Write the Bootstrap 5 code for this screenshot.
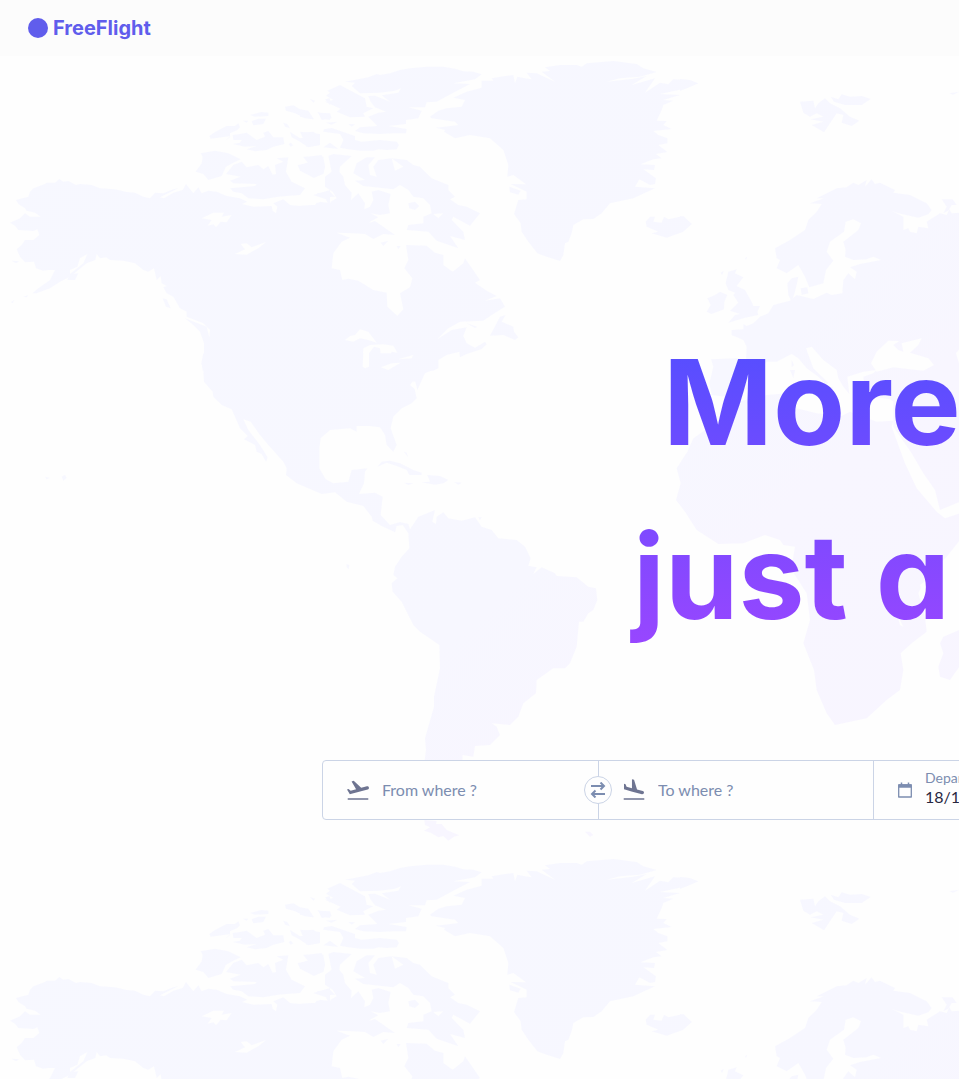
<!DOCTYPE html>
<html lang="en">
<head>
<meta charset="utf-8">
<meta name="viewport" content="width=device-width, initial-scale=1">
<title>FreeFlight</title>
<link href="https://cdn.jsdelivr.net/npm/bootstrap@5.3.0/dist/css/bootstrap.min.css" rel="stylesheet">
<style>
  body { background: #fefefe; font-family: Lato, "Open Sans", sans-serif; overflow-x: hidden; }
  .site-bar { height: 56px; padding: 0 28px; background: #fcfcfc; }
  .brand-link { gap: 5px; color: #605dec; font: 700 20px/24px Inter, sans-serif; }
  .brand-dot { width: 20px; height: 20px; background: #605dec; }
  .hero { min-height: calc(100vh - 56px); padding-top: 259px; padding-left: 322px; }
  .hero-map { inset: 0; }
  .headline { font: 700 118px/174px Inter, sans-serif; font-feature-settings: "cv11"; margin-bottom: 97px;
    background: linear-gradient(#4f4fff, #9c46ff); -webkit-background-clip: text; background-clip: text; color: transparent; }
  .line-one { padding-left: 341px; }
  .line-two { padding-left: 311px; }
  .search { width: 1276px; height: 60px; background: #fefefe; border: 1px solid #cbd4e6; border-radius: 4px; }
  .cell { width: 275px; padding-left: 22px; gap: 11px; color: #6e7491; }
  .cell + .cell { border-left: 1px solid #cbd4e6; }
  .cell input { border: 0; background: none; outline: 0; padding: 0; width: 180px; font-size: 16px; color: #7c8db0; }
  .cell input::placeholder { color: #7c8db0; opacity: 1; }
  .date-label { font-size: 14px; line-height: 18px; color: #7c8db0; }
  .date-cell .date-text { padding-bottom: 4px; }
  .date-cell input { line-height: 20px; color: #27273f; }
  .swap { left: 261px; top: 15px; width: 28px; height: 28px; background: #fefefe; border: 1px solid #cbd4e6; color: #7c8db0; }
</style>
</head>
<body>
<header class="site-bar d-flex align-items-center">
  <a class="brand-link d-flex align-items-center text-decoration-none" href="#"><span class="brand-dot rounded-circle"></span>FreeFlight</a>
</header>
<main class="hero position-relative overflow-hidden">
  <svg class="hero-map position-absolute w-100 h-100" aria-hidden="true">
    <defs>
      <linearGradient id="tint" gradientUnits="userSpaceOnUse" x1="0" y1="0" x2="870" y2="960">
        <stop offset="0" stop-color="#f7f8ff"/><stop offset=".6" stop-color="#f7f7ff"/><stop offset=".7" stop-color="#f8f6ff"/><stop offset="1" stop-color="#f8f5ff"/>
      </linearGradient>
      <mask id="land" maskUnits="userSpaceOnUse" x="0" y="50" width="1920" height="800">
        <!-- Alaska and western Canada -->
        <g fill="#fff" transform="translate(0 50) scale(.33333)">
          <path d="M48 450L85 440 90 425 100 415 135 402 140 398 165 398 178 387 190 395 205 393 228 405 240 402 275 405 300 415 345 418 380 426 405 428 430 440 450 445 465 428 490 430 520 418 535 415 480 442 492 445 520 428 548 420 558 402 568 415 580 430 595 412 605 430 625 422 650 425 680 438 720 445 742 455 726 462 760 470 815 468 818 482 828 490 832 470 820 460 850 448 870 465 900 468 945 465 960 455 993 460V962H608L605 940 612 920 612 880 600 845 580 825 555 805 620 830 628 862 630 840 610 820 560 800 560 785 540 775 520 740 500 730 490 712 500 708 485 700 482 678 470 690 462 655 445 665 430 660 405 640 370 632 330 630 318 622 300 625 290 612 286 630 260 640 235 660 210 680 180 695 150 715 110 730 97 730 115 715 150 690 165 660 145 660 130 662 108 655 102 635 75 637 60 620 50 598 65 585 75 570 100 570 118 555 112 538 100 543 55 540 45 527 30 518 60 505 75 490 90 500 122 500 105 488 80 482 75 475 55 462Z"/>
          <path d="M602 310L645 302 685 310 722 328 700 338 678 350 665 378 625 390 610 372 587 365 605 340 608 320ZM678 372L700 345 725 335 740 352 775 345 790 358 805 348 818 374 828 372 825 345 850 335 830 325 865 322 858 365 875 395 915 415 900 435 860 438 835 440 790 448 745 445 725 430 700 425 690 415 765 408 770 402 700 400 690 392 722 380ZM628 258L645 246 680 228 705 228 715 220 720 232 712 240 690 250 690 262 675 272 692 258 655 263 632 266ZM698 255L720 252 740 248 770 270 795 260 790 248 805 243 820 262 850 262 853 282 820 290 800 300 765 304 740 298 770 288 735 290 698 282 720 278 725 270 700 270ZM750 195L785 186 805 188 805 198 765 200ZM728 212L745 212 740 218ZM755 214L775 206 798 206 790 222 760 226ZM855 170L880 166 900 178 925 182 942 208 915 205 885 190 858 182ZM850 218L862 222 870 235 855 230ZM870 245L900 265 920 262 905 248 940 245 960 258 960 285 925 292 895 272 875 262ZM866 282L872 278 880 286 872 290ZM893 345L925 340 910 322 965 315 975 350 970 370 942 384 900 362ZM930 147L945 152 940 158ZM975 148L990 145V165ZM952 185L990 200V210L965 205ZM940 435L990 420V475L978 448ZM202 690L208 672 235 670 225 690ZM488 745L500 748 512 775 498 770ZM35 632L58 634 48 640ZM33 756L43 750 38 760ZM70 740L85 735 80 742Z"/>
          <path fill="#000" d="M605 505L640 488 672 488 665 500 695 495 680 517 662 515 648 532 640 523 623 527 635 510ZM705 612L735 598 722 582 740 580 755 592 798 576 775 595 755 605 740 614ZM942 752L955 750 970 785 972 808 960 790 945 772ZM210 660L232 650 240 625 262 612 250 640 210 672Z"/>
        </g>
        <!-- Eastern Canada, the Arctic islands and Greenland -->
        <g fill="#fff" transform="translate(300 50) scale(.33333)">
          <path d="M-6 468L45 465 50 458 75 460 85 478 92 455 110 445 98 425 75 410 75 380 95 365 85 318 100 312 155 318 120 350 118 365 130 380 135 405 155 428 153 450 175 430 195 460 193 478 210 470 220 450 215 425 235 420 272 432 265 465 270 490 240 495 212 490 235 502 210 515 195 552 160 550 110 548 150 563 125 575 100 610 95 655 120 660 127 690 145 686 175 692 220 720 260 728 262 770 292 797 310 778 300 730 330 712 337 685 313 655 325 630 318 585 380 587 405 608 430 615 430 645 458 665 490 640 495 625 540 690 525 698 560 722 590 738 555 752 600 745 615 770 575 795 550 812 480 815 445 835 412 868 455 840 500 832 490 858 500 880 525 893 555 875 560 883 545 897 500 912 480 922 478 905 440 915 415 930 415 955 400 962H-6Z"/>
          <path d="M390 200L415 182 440 175 485 170 495 150 460 143 500 125 545 113 545 92 580 92 575 85 615 78 640 75 645 100 652 80 675 85 695 88 680 68 710 70 765 95 725 65 750 63 735 52 780 45 830 45 845 50 860 40 940 33 1010 42 1030 55 1070 66 1020 80 960 85 920 95 1000 86 1040 78 995 105 1065 85 1035 128 1080 98 1105 103 1120 88 1160 90 1195 100 1160 115 1080 132 1140 135 1090 150 1120 152 1090 165 1085 180 1070 212 1100 213 1090 225 1115 237 1060 243 1075 255 1102 265 1102 280 1075 285 1102 306 1068 312 1085 325 1060 328 1022 343 1065 345 1062 360 1030 358 1068 385 1065 402 1050 405 1018 388 1005 410 1065 415 1000 445 930 460 905 490 880 507 850 508 820 525 815 550 805 575 795 580 790 615 780 633 740 620 712 610 685 575 665 545 662 520 642 492 655 450 680 448 680 425 632 402 678 403 640 375 622 380 625 345 610 300 570 265 510 255 465 265 432 245 435 240 408 233 475 225 465 215 395 205ZM628 410L662 422 655 434 630 427Z"/>
          <path d="M135 95L165 98 155 108 180 130 240 128 285 122 303 115 295 128 245 136 270 155 225 137 205 138 212 155 225 172 258 185 235 188 205 200 232 228 180 232 165 243 190 250 240 252 280 250 318 250 320 237 265 228 318 222 318 210 355 205 365 182 325 172 375 172 380 157 410 155 460 128 510 102 460 100 525 88 545 73 520 65 490 64 465 56 430 50 380 50 330 55 300 60 270 70 240 75 230 72 205 82 190 85ZM75 155L100 150 78 137 90 128 82 122 120 105 195 145 200 170 220 175 190 190 195 200 150 202 110 185 122 176ZM55 188L90 190 95 205 65 210ZM145 222L165 223 155 230ZM72 238L95 234 165 258 165 270 185 275 240 270 290 275 297 285 290 298 260 300 235 298 220 302 180 302 145 298 120 293 130 270 120 252 70 245ZM78 218L112 215 95 224ZM70 292L90 278 115 297ZM0 345L30 335 10 320 70 320 75 350 70 372 42 382ZM0 180L40 208 0 200ZM28 147L45 152ZM0 245L60 252 60 285 20 290ZM50 430L90 425 105 440 70 442ZM160 370L170 340 200 322 225 322 205 345 210 375 230 380 220 350 235 330 275 325 285 362 310 350 275 325 320 330 340 345 360 350 395 385 445 405 445 420 465 440 450 448 475 465 500 470 540 490 510 527 460 500 455 510 490 545 495 570 450 558 475 595 410 572 385 545 320 540 325 525 370 520 370 500 395 490 390 465 370 445 340 440 325 420 300 405 280 418 190 408 165 392 195 390ZM195 552L205 520 225 513 285 555 250 552 220 567ZM242 578L265 572 250 588ZM325 460L345 455 358 468 345 480 328 475ZM290 588L302 588 295 598ZM500 820L532 830 525 834ZM570 857L600 800 617 795 605 815 640 830 642 845 655 862 645 870 610 855ZM1037 515L1050 500 1065 500 1060 515 1085 518 1092 500 1105 508 1150 498 1175 522 1150 545 1100 563 1055 550 1075 545 1040 530Z"/>
          <path fill="#000" d="M135 870L150 858 165 855 180 838 205 845 230 878 205 870 180 865 160 875ZM188 948L190 895 210 885 250 883 280 887 292 908 275 905 262 935 255 912 243 918 240 895 222 890 207 910 207 945 197 955ZM297 928L315 918 340 915 335 924ZM245 955L270 940 302 935 280 950 255 962ZM400 492L430 490 415 505Z"/>
        </g>
        <!-- United States, Central and South America -->
        <g fill="#fff" transform="translate(180 320) scale(.33333)">
          <path d="M70 100L64 130 70 150 72 185 98 215 100 230 125 255 155 268 180 325 203 348 192 358 225 375 230 395 245 402 258 425 263 412 240 375 205 330 190 298 212 305 240 345 265 375 310 425 320 445 318 465 350 490 425 522 465 517 500 545 550 558 575 590 578 602 605 618 645 637 650 618 668 615 685 640 688 685 665 710 645 740 640 765 652 775 635 790 638 815 665 845 700 915 720 935 778 975 780 1045 762 1130 762 1160 735 1255 738 1290 730 1350H845L848 1305 880 1310 885 1278 930 1275 960 1245 950 1220 935 1210 990 1215 1015 1190 1030 1150 1068 1120 1070 1080 1120 1045 1155 1045 1170 1030 1190 980 1197 905 1210 905 1225 880 1240 870 1252 840 1248 805 1225 800 1190 772 1130 768 1125 760 1085 742 1060 762 1070 742 1045 737 1052 715 1035 680 1010 660 955 655 935 630 905 620 885 592 845 602 805 595 790 577 770 590 768 612 757 605 765 570 715 590 690 628 685 612 660 606 630 615 602 585 608 530 585 518 537 522 552 490 555 455 562 445 515 450 505 485 460 490 437 478 418 445 418 385 422 355 450 330 510 325 530 335 530 318 570 318 600 322 615 345 620 375 640 395 650 375 632 325 640 290 665 265 695 250 710 235 700 190 705 182 712 210 735 160 770 145 775 100Z"/>
          <path d="M592 440L605 425 630 422 660 430 700 450 725 458 725 465 688 465 680 450 650 438 620 428ZM724 487L750 485 742 465 780 468 805 480 790 490 765 494ZM822 486L845 488 835 494ZM672 488L700 490 685 495ZM672 395L680 398 684 412ZM895 592L905 592 900 600ZM500 732L508 735 506 748 500 742ZM-405 470L-390 474 -400 478ZM-355 470L-345 464 -340 474 -350 482Z"/>
          <path fill="#000" d="M1028 1165L1035 1148 1040 1155ZM548 140L550 95 567 90 567 140 555 145ZM602 142L635 130 662 128 625 150ZM655 118L700 105 695 115ZM690 195L700 182 708 210Z"/>
          <path d="M733 1500L770 1503 768 1512 785 1512 800 1530 838 1546 822 1550 805 1562 790 1548 775 1552 752 1538 732 1532 750 1522 735 1515ZM1215 1535L1230 1535 1240 1545 1230 1550Z"/>
        </g>
        <!-- Northern Europe -->
        <g fill="#fff" transform="translate(680 50) scale(.33333)">
          <path d="M840 870V488L815 490 808 478 800 495 780 490 740 515 745 535 715 530 710 550 690 545 685 535 670 540 670 500 635 482 655 490 715 503 745 493 755 480 740 460 690 435 640 428 645 420 600 398 585 402 575 388 555 410 560 390 535 405 520 398 500 412 470 415 440 430 410 445 432 445 390 460 425 462 410 485 385 510 375 540 330 570 285 595 290 625 300 630 290 655 320 670 355 645 375 680 388 712 430 700 438 660 460 632 440 605 450 575 492 545 497 515 520 508 543 520 535 540 490 575 497 600 495 620 520 630 560 628 580 620 603 630 540 642 510 652 530 665 525 688 505 670 490 690 487 730 455 735 440 728 400 747 350 735 330 752 280 765 265 790 240 800 220 820 200 828 190 822 190 838 155 840 155 855 175 858 190 870Z"/>
          <path d="M322 700L335 685 355 680 350 705 345 725 335 755 325 735ZM362 715L382 712 385 730 365 735ZM80 785L92 765 82 745 105 735 120 725 142 735 133 755 132 778 95 792ZM137 700L145 665 170 658 165 670 190 682 170 708 195 720 215 755 220 768 240 768 232 785 235 795 195 803 145 818 165 795 180 792 150 782 175 758 160 735 165 728 145 720ZM122 668L132 662 126 675ZM195 625L202 620 198 630ZM360 155L400 152 405 175 415 160 435 145 450 160 480 175 510 200 538 212 515 228 485 218 490 195 470 190 450 220 432 247 395 225 430 215 392 208 430 200 410 190 390 200 370 188ZM452 140L475 148 485 133 510 140 545 138 572 147 545 165 495 165 462 155ZM808 130L837 125 820 134ZM785 448L818 448 830 465 815 465 805 482 790 490 800 470ZM0 87L30 90 54 100 0 123ZM0 498L15 505 35 522 0 548Z"/>
        </g>
        <!-- Southern Europe, the Middle East and Africa -->
        <g fill="#fff" transform="translate(610 330) scale(.33333)">
          <path d="M365 0L365 15 400 30 410 50 408 90 380 85 303 88 310 110 298 160 305 195 345 200 395 190 435 160 450 115 470 95 500 95 545 72 565 85 590 115 625 140 640 155 640 172 655 158 610 115 588 55 605 50 640 90 680 120 685 145 700 170 718 192 712 140 760 125 800 120 790 130 760 140 765 180 790 200 840 208 850 215 850 290 905 370 940 430 975 480 990 540 1050 515V0Z"/>
          <path d="M300 290L250 325 232 365 200 415 212 460 198 510 225 545 260 600 325 642 400 640 465 615 510 630 520 645 555 650 550 680 545 720 590 790 600 870 580 940 612 1020 620 1080 650 1150 675 1185 770 1165 830 1110 870 1080 880 1020 872 970 905 940 950 905 945 860 925 790 950 740 1010 680 1050 630V550L1005 565 980 545 920 475 885 400 845 290 850 272 800 275 720 245 690 260 670 255 620 250 560 235 555 192 530 190 470 195 385 215 340 260ZM1048 900L1000 920 990 940 1000 970 985 1010 990 1040 1020 1050 1048 1010ZM625 175L670 170 660 190ZM540 120L555 120 550 145ZM545 90L552 105 545 112Z"/>
          <path fill="#000" d="M783 100L800 65 835 32 868 33 850 45 865 60 880 65 875 40 935 25 925 45 900 68 955 85 972 105 940 122 900 118 850 112 800 125ZM1038 70L1050 55V110ZM930 765L950 750 950 790 935 785ZM860 850L880 890 870 885Z"/>
        </g>
      </mask>
      <pattern id="world" patternUnits="userSpaceOnUse" width="1920" height="798">
        <g transform="translate(0 -56)"><rect y="50" width="1920" height="804" fill="url(#tint)" mask="url(#land)"/></g>
      </pattern>
    </defs>
    <rect width="100%" height="100%" fill="url(#world)"/>
  </svg>
  <h1 class="headline position-relative text-nowrap"><span class="line-one d-block">More</span><span class="line-two d-block">just a</span></h1>
  <form class="search position-relative d-flex">
    <label class="cell d-flex align-items-center flex-shrink-0">
      <svg width="26" height="26" viewBox="0 0 24 24" fill="currentColor" aria-hidden="true"><path d="M2.5 19.500h19v1.500h-19zm19.57-9.86c-.21-.8-1.04-1.28-1.84-1.06L14.92 10l-6.9-6.43-1.93.51 4.14 7.17-4.97 1.33-1.97-1.54-1.45.39 1.82 3.16.77 1.33 1.6-.43 5.31-1.42 4.35-1.16L21 11.49c.81-.23 1.28-1.05 1.07-1.85z"/></svg>
      <input type="text" placeholder="From where ?" aria-label="From where ?">
    </label>
    <label class="cell d-flex align-items-center flex-shrink-0">
      <svg width="26" height="26" viewBox="0 0 24 24" fill="currentColor" aria-hidden="true"><path d="M2.5 19.500h19v1.500h-19zm7.18-6.23l4.35 1.16 5.31 1.42c.8.21 1.62-.26 1.84-1.06.21-.8-.26-1.62-1.06-1.84l-5.31-1.42-2.76-9.02L10.12 2v8.28L5.15 8.95l-.93-2.32-1.45-.39v5.17l1.6.43 5.31 1.43z"/></svg>
      <input type="text" placeholder="To where ?" aria-label="To where ?">
    </label>
    <label class="cell date-cell d-flex align-items-center flex-shrink-0">
      <svg width="18" height="18" viewBox="0 0 18 18" fill="none" stroke="#7c8db0" aria-hidden="true"><path d="M2.700 4h12.600v12H2.700z" stroke-width="1.300" stroke-linejoin="round"/><path d="M2.500 5h13" stroke-width="3.500"/><path d="M5.500 1.500v3M12.500 1.500v3" stroke-width="1.500"/></svg>
      <span class="date-text d-flex flex-column"><span class="date-label">Departure</span><input type="text" value="18/11" aria-label="Departure date"></span>
    </label>
    <button type="button" class="swap position-absolute rounded-circle p-0 d-flex align-items-center justify-content-center" aria-label="Swap places">
      <svg class="flex-shrink-0" width="16" height="16" viewBox="0 0 16 16" fill="none" stroke="currentColor" stroke-width="2" aria-hidden="true"><path d="M1 4h12.500M10.500.500L14 4l-3.500 3.500M15 12H2.500M5.500 8.500L2 12l3.500 3.500"/></svg>
    </button>
  </form>
</main>
<script src="https://cdn.jsdelivr.net/npm/bootstrap@5.3.0/dist/js/bootstrap.bundle.min.js"></script>
</body>
</html>
